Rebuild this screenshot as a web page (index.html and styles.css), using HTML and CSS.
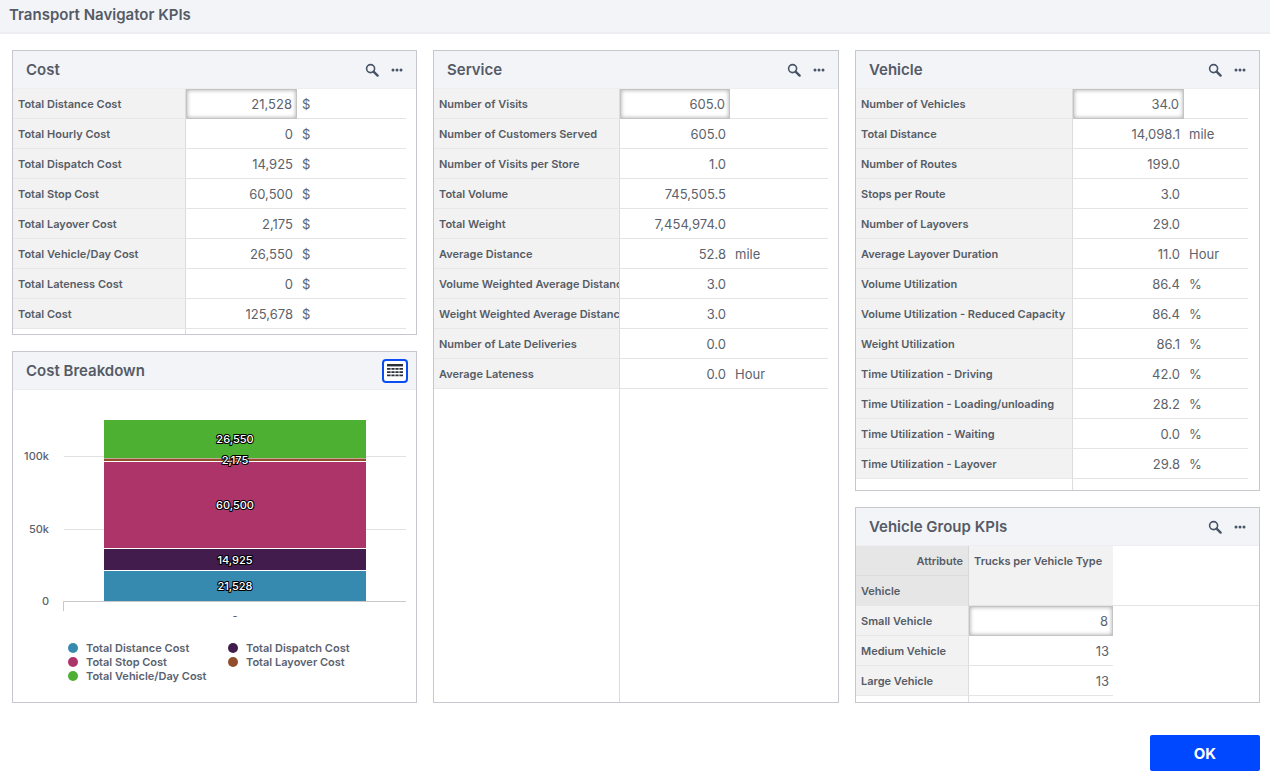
FILE: index.html
```html
<!DOCTYPE html>
<html lang="en">
<head>
<meta charset="utf-8">
<title>Transport Navigator KPIs</title>
<link rel="stylesheet" href="styles.css">
</head>
<body>
<svg class="defs" width="0" height="0" aria-hidden="true">
  <symbol id="i-search" viewBox="0 0 14 14"><circle cx="5.6" cy="5.6" r="4" fill="none" stroke="currentColor" stroke-width="1.6"/><path d="M8.6 8.6l4 4" stroke="currentColor" stroke-width="2.4" stroke-linecap="round"/></symbol>
  <symbol id="i-more" viewBox="0 0 12 4"><circle cx="2" cy="2" r="1.5" fill="currentColor"/><circle cx="6" cy="2" r="1.5" fill="currentColor"/><circle cx="10" cy="2" r="1.5" fill="currentColor"/></symbol>
</svg>
<header class="topbar">Transport Navigator KPIs</header>
<main class="board">
  <div class="column col-left">
    <section class="panel panel-cost">
      <div class="panel-head"><h2>Cost</h2><div class="tools"><svg class="ic-search"><use href="#i-search"/></svg><svg class="ic-more"><use href="#i-more"/></svg></div></div>
      <div class="kpi kpi-cost">
        <div class="lab">Total Distance Cost</div><div class="val sel">21,528</div><div class="unit">$</div>
        <div class="lab">Total Hourly Cost</div><div class="val">0</div><div class="unit">$</div>
        <div class="lab">Total Dispatch Cost</div><div class="val">14,925</div><div class="unit">$</div>
        <div class="lab">Total Stop Cost</div><div class="val">60,500</div><div class="unit">$</div>
        <div class="lab">Total Layover Cost</div><div class="val">2,175</div><div class="unit">$</div>
        <div class="lab">Total Vehicle/Day Cost</div><div class="val">26,550</div><div class="unit">$</div>
        <div class="lab">Total Lateness Cost</div><div class="val">0</div><div class="unit">$</div>
        <div class="lab">Total Cost</div><div class="val">125,678</div><div class="unit">$</div>
        <div class="filler"></div>
      </div>
    </section>
    <section class="panel panel-chart">
      <div class="panel-head"><h2>Cost Breakdown</h2><div class="tools"><span class="table-btn"><svg width="18" height="14" viewBox="0 0 18 14"><path d="M1 0h16v2.4H1z" fill="#2b3038"/><path d="M1 4h3.6v1.8H1zM5.4 4h3.2v1.8H5.4zM9.4 4h3.2v1.8H9.4zM13.4 4H17v1.8h-3.6zM1 7.2h3.6V9H1zM5.4 7.2h3.2V9H5.4zM9.4 7.2h3.2V9H9.4zM13.4 7.2H17V9h-3.6zM1 10.4h3.6v1.8H1zM5.4 10.4h3.2v1.8H5.4zM9.4 10.4h3.2v1.8H9.4zM13.4 10.4H17v1.8h-3.6z" fill="#2b3038"/></svg></span></div></div>
      <svg class="chart" width="403" height="240" viewBox="13 390 403 240">
        <g class="grid"><path d="M64 456.5H406M64 529.5H406"/></g>
        <rect x="104" y="420" width="262" height="38" fill="#4db033"/>
        <rect x="102" y="458" width="266" height="4" fill="#fff"/>
        <rect x="104" y="458.5" width="262" height="2.5" fill="#924e2c"/>
        <rect x="102" y="547.5" width="266" height="1.5" fill="#fff"/>
        <rect x="104" y="462" width="262" height="86" fill="#ad3469"/>
        <rect x="104" y="549" width="262" height="21" fill="#431c4e"/>
        <rect x="104" y="571" width="262" height="30" fill="#368ab0"/>
        <path class="axis" d="M63.5 611V601.5H406"/>
        <g class="tick"><text x="49" y="460">100k</text><text x="49" y="533">50k</text><text x="49" y="605">0</text></g>
        <text class="cat" x="235" y="620">-</text>
        <g class="bar-label">
          <text x="235" y="443">26,550</text><text x="235" y="464">2,175</text><text x="235" y="509">60,500</text><text x="235" y="564">14,925</text><text x="235" y="590">21,528</text>
        </g>
      </svg>
      <ul class="legend">
        <li><i class="dot d1"></i>Total Distance Cost</li>
        <li><i class="dot d2"></i>Total Dispatch Cost</li>
        <li><i class="dot d3"></i>Total Stop Cost</li>
        <li><i class="dot d4"></i>Total Layover Cost</li>
        <li><i class="dot d5"></i>Total Vehicle/Day Cost</li>
      </ul>
    </section>
  </div>
  <div class="column">
    <section class="panel panel-service">
      <div class="panel-head"><h2>Service</h2><div class="tools"><svg class="ic-search"><use href="#i-search"/></svg><svg class="ic-more"><use href="#i-more"/></svg></div></div>
      <div class="kpi kpi-service">
        <div class="lab">Number of Visits</div><div class="val sel">605.0</div><div class="unit"></div>
        <div class="lab">Number of Customers Served</div><div class="val">605.0</div><div class="unit"></div>
        <div class="lab">Number of Visits per Store</div><div class="val">1.0</div><div class="unit"></div>
        <div class="lab">Total Volume</div><div class="val">745,505.5</div><div class="unit"></div>
        <div class="lab">Total Weight</div><div class="val">7,454,974.0</div><div class="unit"></div>
        <div class="lab">Average Distance</div><div class="val">52.8</div><div class="unit">mile</div>
        <div class="lab">Volume Weighted Average Distance</div><div class="val">3.0</div><div class="unit"></div>
        <div class="lab">Weight Weighted Average Distance</div><div class="val">3.0</div><div class="unit"></div>
        <div class="lab">Number of Late Deliveries</div><div class="val">0.0</div><div class="unit"></div>
        <div class="lab">Average Lateness</div><div class="val">0.0</div><div class="unit">Hour</div>
        <div class="filler"></div>
      </div>
    </section>
  </div>
  <div class="column">
    <section class="panel panel-vehicle">
      <div class="panel-head"><h2>Vehicle</h2><div class="tools"><svg class="ic-search"><use href="#i-search"/></svg><svg class="ic-more"><use href="#i-more"/></svg></div></div>
      <div class="kpi kpi-vehicle">
        <div class="lab">Number of Vehicles</div><div class="val sel">34.0</div><div class="unit"></div>
        <div class="lab">Total Distance</div><div class="val">14,098.1</div><div class="unit">mile</div>
        <div class="lab">Number of Routes</div><div class="val">199.0</div><div class="unit"></div>
        <div class="lab">Stops per Route</div><div class="val">3.0</div><div class="unit"></div>
        <div class="lab">Number of Layovers</div><div class="val">29.0</div><div class="unit"></div>
        <div class="lab">Average Layover Duration</div><div class="val">11.0</div><div class="unit">Hour</div>
        <div class="lab">Volume Utilization</div><div class="val">86.4</div><div class="unit">%</div>
        <div class="lab">Volume Utilization - Reduced Capacity</div><div class="val">86.4</div><div class="unit">%</div>
        <div class="lab">Weight Utilization</div><div class="val">86.1</div><div class="unit">%</div>
        <div class="lab">Time Utilization - Driving</div><div class="val">42.0</div><div class="unit">%</div>
        <div class="lab">Time Utilization - Loading/unloading</div><div class="val">28.2</div><div class="unit">%</div>
        <div class="lab">Time Utilization - Waiting</div><div class="val">0.0</div><div class="unit">%</div>
        <div class="lab">Time Utilization - Layover</div><div class="val">29.8</div><div class="unit">%</div>
        <div class="filler"></div>
      </div>
    </section>
    <section class="panel panel-group">
      <div class="panel-head"><h2>Vehicle Group KPIs</h2><div class="tools"><svg class="ic-search"><use href="#i-search"/></svg><svg class="ic-more"><use href="#i-more"/></svg></div></div>
      <div class="pivot">
        <div class="corner attr">Attribute</div><div class="colhead">Trucks per Vehicle Type</div><div class="rest"></div>
        <div class="corner">Vehicle</div>
        <div class="lab">Small Vehicle</div><div class="val sel">8</div>
        <div class="lab">Medium Vehicle</div><div class="val">13</div>
        <div class="lab">Large Vehicle</div><div class="val">13</div>
        <div class="filler"></div>
      </div>
    </section>
  </div>
</main>
<footer class="footer"><button class="ok" type="button">OK</button></footer>
</body>
</html>
```
FILE: styles.css
```css
* { box-sizing: border-box; }
html, body { margin: 0; padding: 0; }
body {
  width: 1270px;
  height: 781px;
  overflow: hidden;
  background: #fff;
  font-family: Inter, "Liberation Sans", sans-serif;
  color: #555b66;
}
.defs { position: absolute; }
.topbar {
  height: 34px;
  padding: 6px 9px 0;
  background: #f3f4f8;
  border-bottom: 2px solid #eceef2;
  font-size: 15px;
  font-weight: 600;
  line-height: 18px;
  color: #555b66;
}
.board {
  display: grid;
  grid-template-columns: 405px 406px 405px;
  gap: 16px;
  height: 653px;
  margin: 16px 10px 0 12px;
}
.column { display: flex; flex-direction: column; gap: 16px; min-height: 0; }
.panel {
  display: flex;
  flex-direction: column;
  border: 1px solid #c6c8cd;
  background: #fff;
  min-height: 0;
}
.panel-cost { height: 285px; }
.panel-chart { flex: 1; }
.panel-service { flex: 1; }
.panel-vehicle { height: 441px; }
.panel-group { flex: 1; }
.panel-head {
  flex: none;
  display: flex;
  align-items: center;
  justify-content: space-between;
  height: 38px;
  padding: 0 13px 0 13px;
  background: #f3f4f8;
  border-bottom: 1px solid #eceef2;
}
.panel-head h2 {
  margin: 0;
  font-size: 15px;
  font-weight: 600;
  color: #555b66;
}
.tools { display: flex; align-items: center; gap: 12px; color: #475366; }
.ic-search { width: 14px; height: 14px; }
.ic-more { width: 12px; height: 4px; }
.table-btn {
  display: flex;
  align-items: center;
  justify-content: center;
  width: 26px;
  height: 24px;
  margin-right: -5px;
  border: 2px solid #0a4df5;
  border-radius: 4px;
  background: #fff;
}
.kpi {
  flex: 1;
  display: grid;
  grid-auto-rows: 30px;
  padding-right: 10px;
  min-height: 0;
}
.kpi-cost { grid-template-columns: 173px 111px 1fr; grid-template-rows: repeat(8, 30px) 1fr; }
.kpi-service { grid-template-columns: 186px 110px 1fr; grid-template-rows: repeat(10, 30px) 1fr; }
.kpi-vehicle { grid-template-columns: 217px 111px 1fr; padding-right: 11px; grid-template-rows: repeat(13, 30px) 1fr; }
.lab {
  display: flex;
  align-items: center;
  min-width: 0;
  padding: 0 5px;
  background: #f2f2f2;
  border-bottom: 1px solid #e8e8e8;
  border-right: 1px solid #dcdcdc;
  font-size: 11px;
  font-weight: 600;
  color: #565c66;
  white-space: nowrap;
  overflow: hidden;
}
.val {
  display: flex;
  align-items: center;
  justify-content: flex-end;
  padding-right: 4px;
  border-bottom: 1px solid #e4e4e4;
  font-size: 13px;
  color: #5c626c;
}
.unit {
  display: flex;
  align-items: center;
  padding-left: 5px;
  border-bottom: 1px solid #e4e4e4;
  font-size: 13px;
  color: #5c626c;
}
.sel {
  background: #fff;
  border: 1px solid #c4c4c4;
  box-shadow: inset 0 0 4px rgba(0, 0, 0, 0.35);
}
.filler { grid-column: 1; border-right: 1px solid #dcdcdc; }
.chart { display: block; flex: none; }
.grid path { stroke: #e2e2e2; stroke-width: 1; fill: none; }
.axis { stroke: #c8c8c8; stroke-width: 1; fill: none; }
.tick text { font-size: 11px; font-weight: 500; fill: #5c626c; text-anchor: end; }
.cat { font-size: 11px; fill: #5c626c; text-anchor: middle; }
.bar-label text {
  font-size: 11px;
  font-weight: 500;
  fill: #fff;
  stroke: #000;
  stroke-width: 2px;
  paint-order: stroke;
  text-anchor: middle;
}
.legend {
  display: grid;
  grid-template-columns: 160px 1fr;
  grid-auto-rows: 14px;
  margin: 11px 0 0;
  padding: 0 0 0 55px;
  list-style: none;
  font-size: 11px;
  font-weight: 600;
  color: #5a6270;
}
.legend li { display: flex; align-items: center; gap: 8px; white-space: nowrap; }
.dot { width: 10px; height: 10px; border-radius: 50%; flex: none; }
.d1 { background: #368ab0; }
.d2 { background: #431c4e; }
.d3 { background: #ad3469; }
.d4 { background: #924e2c; }
.d5 { background: #4db033; }
.pivot {
  flex: 1;
  display: grid;
  grid-template-columns: 113px 144px 1fr;
  grid-template-rows: 30px 30px 30px 30px 30px 1fr;
  min-height: 0;
}
.corner {
  display: flex;
  align-items: center;
  padding: 0 5px;
  background: #e6e6e6;
  border-right: 1px solid #d8d8d8;
  font-size: 11px;
  font-weight: 600;
  color: #565c66;
}
.attr { justify-content: flex-end; border-bottom: 1px solid #dcdcdc; }
.colhead {
  grid-row: span 2;
  padding: 8px 5px 0;
  background: #f2f2f2;
  border-bottom: 1px solid #e4e4e4;
  font-size: 11px;
  font-weight: 600;
  color: #565c66;
}
.rest { grid-row: span 2; border-bottom: 1px solid #e4e4e4; }
.pivot .lab { grid-column: 1; }
.pivot .val { grid-column: 2; }
.pivot .filler { grid-column: 1; }
.footer { display: flex; justify-content: flex-end; padding: 32px 10px 0 0; }
.ok {
  width: 110px;
  height: 36px;
  border: 0;
  border-radius: 2px;
  background: #0048ff;
  color: #fff;
  font: 700 15px Inter, "Liberation Sans", sans-serif;
}
```
